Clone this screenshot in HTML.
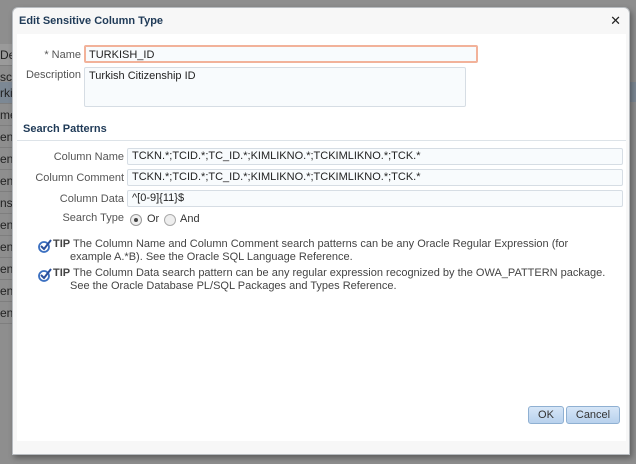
<!DOCTYPE html>
<html><head><style>
*{box-sizing:border-box}
body{margin:0;width:636px;height:464px;background:#8e8e8e;font-family:"Liberation Sans",sans-serif;font-size:11px;color:#333;position:relative;overflow:hidden}
.bgrow{position:absolute;left:0;width:12px;height:22px;border-bottom:1px solid #7e7e7e;color:#222;font-size:12px;line-height:22px;overflow:hidden;white-space:nowrap}
.dlg{position:absolute;left:12px;top:7px;width:618px;height:448px;background:#f7f7f7;border:1px solid #b8bcc0;border-radius:6px 6px 0 0;box-shadow:2px 3px 6px rgba(0,0,0,.35)}
.title{position:absolute;left:6px;top:7px;font-weight:bold;font-size:11px;color:#1f3a57}
.close{position:absolute;right:8px;top:5px;font-size:13px;color:#222}
.body{position:absolute;left:4px;top:26px;width:609px;height:407px;background:#fff}
.lbl{position:absolute;text-align:right;color:#555;font-size:11px;white-space:nowrap}
.inp{position:absolute;background:#f8fbfd;border:1px solid #d6dde4;border-radius:2px;font-size:11px;color:#222;padding:2px 4px;white-space:nowrap}
.tip{position:absolute;font-size:11px;color:#444;line-height:13px;padding-left:17px;text-indent:-17px;white-space:nowrap}
.btn{position:absolute;top:398px;height:18px;background:linear-gradient(#d6e6f7,#b8d1ed);border:1px solid #8fb0d2;border-radius:3px;font-size:11px;color:#333;text-align:center;line-height:16px}
</style></head><body>
<div class="bgrow" style="top:44px;background:#9a9a9a">De</div>
<div class="bgrow" style="top:66px">sc</div>
<div class="bgrow" style="top:82px;background:#7c8894">rkis</div>
<div class="bgrow" style="top:104px">me</div>
<div class="bgrow" style="top:126px">enti</div>
<div class="bgrow" style="top:148px">enti</div>
<div class="bgrow" style="top:170px">enti</div>
<div class="bgrow" style="top:192px">ns</div>
<div class="bgrow" style="top:214px">enti</div>
<div class="bgrow" style="top:236px">enti</div>
<div class="bgrow" style="top:258px">enti</div>
<div class="bgrow" style="top:280px">enti</div>
<div class="bgrow" style="top:302px">enti</div>
<div style="position:absolute;left:630px;top:82px;width:6px;height:20px;background:#7c8894"></div>
<div class="dlg">
<div class="title">Edit Sensitive Column Type</div>
<div class="close">✕</div>
<div class="body">
 <div class="lbl" style="left:0;width:64px;top:15px">* Name</div>
 <div class="inp" style="left:67px;top:11px;width:394px;height:18px;border:2px solid #f2b29a;padding:1px 3px;font-size:11px;line-height:14px">TURKISH_ID</div>
 <div class="lbl" style="left:0;width:64px;top:35px">Description</div>
 <div class="inp" style="left:67px;top:33px;width:382px;height:40px">Turkish Citizenship ID</div>
 <div style="position:absolute;left:6px;top:89px;font-weight:bold;font-size:11px;color:#1f3a57">Search Patterns</div>
 <div style="position:absolute;left:0;top:106px;width:609px;border-top:1px solid #dde3e8"></div>
 <div class="lbl" style="left:0;width:107px;top:117px">Column Name</div>
 <div class="inp" style="left:110px;top:114px;width:496px;height:17px;padding:1px 4px">TCKN.*;TCID.*;TC_ID.*;KIMLIKNO.*;TCKIMLIKNO.*;TCK.*</div>
 <div class="lbl" style="left:0;width:107px;top:138px">Column Comment</div>
 <div class="inp" style="left:110px;top:135px;width:496px;height:17px;padding:1px 4px">TCKN.*;TCID.*;TC_ID.*;KIMLIKNO.*;TCKIMLIKNO.*;TCK.*</div>
 <div class="lbl" style="left:0;width:107px;top:159px">Column Data</div>
 <div class="inp" style="left:110px;top:156px;width:496px;height:17px;padding:1px 4px">^[0-9]{11}$</div>
 <div class="lbl" style="left:0;width:107px;top:178px">Search Type</div>
 <div style="position:absolute;left:113px;top:180px;width:12px;height:12px;border-radius:50%;border:1px solid #999;background:#eee"><div style="position:absolute;left:3px;top:3px;width:4px;height:4px;border-radius:50%;background:#444"></div></div>
 <div style="position:absolute;left:130px;top:179px">Or</div>
 <div style="position:absolute;left:147px;top:180px;width:12px;height:12px;border-radius:50%;border:1px solid #aaa;background:#eee"></div>
 <div style="position:absolute;left:163px;top:179px">And</div>
 <svg style="position:absolute;left:21px;top:205px" width="14" height="14" viewBox="0 0 14 14"><circle cx="6" cy="8" r="5" fill="none" stroke="#3a6fc0" stroke-width="1.8"/><path d="M3 7l3 3 7-9" fill="none" stroke="#2a4f9a" stroke-width="2"/></svg>
 <div class="tip" style="left:36px;top:204px"><b>TIP</b> The Column Name and Column Comment search patterns can be any Oracle Regular Expression (for<br>example A.*B). See the Oracle SQL Language Reference.</div>
 <svg style="position:absolute;left:21px;top:234px" width="14" height="14" viewBox="0 0 14 14"><circle cx="6" cy="8" r="5" fill="none" stroke="#3a6fc0" stroke-width="1.8"/><path d="M3 7l3 3 7-9" fill="none" stroke="#2a4f9a" stroke-width="2"/></svg>
 <div class="tip" style="left:36px;top:233px"><b>TIP</b> The Column Data search pattern can be any regular expression recognized by the OWA_PATTERN package.<br>See the Oracle Database PL/SQL Packages and Types Reference.</div>
</div>
<div class="btn" style="left:515px;width:36px">OK</div>
<div class="btn" style="left:553px;width:54px">Cancel</div>
</div>
</body></html>
